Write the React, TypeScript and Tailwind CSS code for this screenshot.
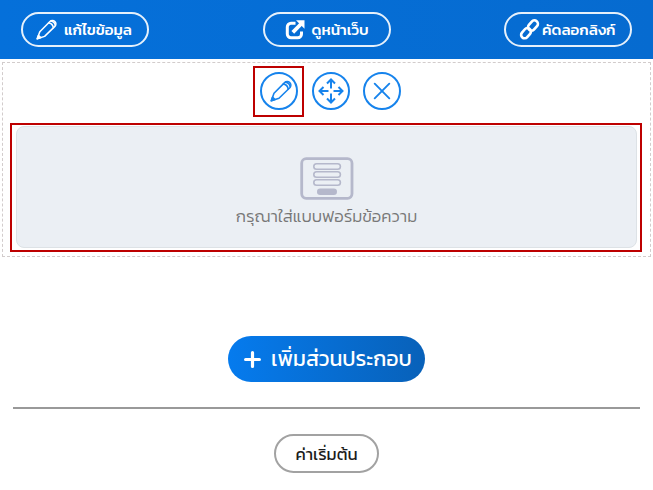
import type { ReactNode } from "react";

const THAI_FONT = "font-['Kanit','Prompt','Noto_Sans_Thai','Noto_Sans',sans-serif]";

function PencilIcon({ className }: { className?: string }) {
  return (
    <svg viewBox="0 0 22 22" className={className} fill="none" stroke="currentColor" strokeWidth="1.6" strokeLinejoin="round" strokeLinecap="round">
      <path d="M1.3 20.7 4 13.3 14.6 2.6A3.6 3.6 0 0 1 19.8 7.7L9 18.2Z" />
      <path d="M13.2 4.1C16 4.3 17.7 6 18.2 9.1M15.6 2.1C18.2 2.6 19.8 4.2 20.2 6.6" />
      <path d="M1.3 20.7 2.5 17.2 5 19.5Z" fill="currentColor" />
    </svg>
  );
}

function OpenIcon() {
  return (
    <svg viewBox="0 0 20 20" className="ml-5 h-5 w-5 shrink-0" fill="none" stroke="currentColor">
      <path d="M10.5 3.3H6A3.7 3.7 0 0 0 2.3 7V14A3.7 3.7 0 0 0 6 17.7H12.8A3.7 3.7 0 0 0 16.5 14V11.5" strokeWidth="3" />
      <path d="M7.8 12.3 16 4" strokeWidth="3.8" />
      <path d="M11 0.3H19.5V8.8Z" fill="currentColor" stroke="none" />
    </svg>
  );
}

function LinkIcon() {
  return (
    <svg viewBox="0 0 20 20" className="ml-[13px] h-[21px] w-[21px] shrink-0" fill="none" stroke="currentColor" strokeWidth="2.5">
      <rect x="-5.4" y="-3.3" width="10.8" height="6.6" rx="3.3" transform="translate(13.3 6.2) rotate(-49)" />
      <rect x="-5.4" y="-3.3" width="10.8" height="6.6" rx="3.3" transform="translate(6.7 13.5) rotate(-49)" />
    </svg>
  );
}

function MoveIcon() {
  return (
    <svg viewBox="0 0 26 26" className="h-[26px] w-[26px] shrink-0" fill="none" stroke="currentColor" strokeWidth="2">
      <path d="M13 10.5V2M13 15.5V24M10.5 13H2M15.5 13H24" />
      <path d="M9 5.5 13 1.5 17 5.5M9 20.5 13 24.5 17 20.5M5.5 9 1.5 13 5.5 17M20.5 9 24.5 13 20.5 17" />
    </svg>
  );
}

function CloseIcon() {
  return (
    <svg viewBox="0 0 18 18" className="h-[18px] w-[18px]" fill="none" stroke="currentColor" strokeWidth="1.9" strokeLinecap="round">
      <path d="M1.7 1.7 16.3 16.3M16.3 1.7 1.7 16.3" />
    </svg>
  );
}

function FormIcon() {
  return (
    <svg viewBox="0 0 54 43" className="ml-0.5 h-[43px] w-[54px] shrink-0" fill="none" stroke="#b5b8cb">
      <rect x="1.7" y="1.7" width="50.3" height="39.6" rx="4.5" strokeWidth="2.8" />
      <rect x="13.8" y="6.8" width="26.6" height="5.5" rx="2.75" strokeWidth="1.6" />
      <rect x="13.8" y="14.8" width="26.6" height="5.5" rx="2.75" strokeWidth="1.6" />
      <rect x="13.8" y="22.8" width="26.6" height="5.5" rx="2.75" strokeWidth="1.6" />
      <rect x="17" y="31.5" width="20" height="6.5" rx="3.2" fill="#b5b8cb" stroke="none" />
    </svg>
  );
}

function HeaderButton({ children }: { children: ReactNode }) {
  return (
    <button className="flex h-[35px] w-32 items-center rounded-full border-2 border-white/90 text-[15.2px] leading-5 font-medium whitespace-nowrap text-white">
      {children}
    </button>
  );
}

function RoundButton({ children }: { children: ReactNode }) {
  return (
    <button className="flex h-[38px] w-[38px] shrink-0 items-center justify-center rounded-full border-2 border-[#1683ec]">
      {children}
    </button>
  );
}

export default function App() {
  return (
    <div className={`h-[490px] w-[653px] overflow-hidden bg-white ${THAI_FONT}`}>
      <header className="flex h-[59px] items-center justify-between bg-linear-to-r from-[#0570da] to-[#066bd0] px-[21px]">
        <HeaderButton>
          <PencilIcon className="ml-[13px] h-[21px] w-[21px] shrink-0" />
          <span className="ml-[7px] pt-px">แก้ไขข้อมูล</span>
        </HeaderButton>
        <HeaderButton>
          <OpenIcon />
          <span className="ml-[7px] pt-px">ดูหน้าเว็บ</span>
        </HeaderButton>
        <HeaderButton>
          <LinkIcon />
          <span className="ml-0.5 pt-px">คัดลอกลิงก์</span>
        </HeaderButton>
      </header>

      <section className="mt-[3px] ml-0.5 h-[195px] w-[649px] border border-dashed border-[#d2cccc]">
        <div className="flex items-center pt-[3px] pl-[250px] text-[#1683ec]">
          <div className="flex h-[51px] w-[51px] items-center justify-center border-2 border-[#bd0000] pb-0.5 pl-px">
            <RoundButton>
              <PencilIcon className="ml-[3px] h-[22px] w-[22px]" />
            </RoundButton>
          </div>
          <div className="ml-2 flex gap-[13px] pb-0.5">
            <RoundButton>
              <MoveIcon />
            </RoundButton>
            <RoundButton>
              <CloseIcon />
            </RoundButton>
          </div>
        </div>
        <div className="mt-1.5 ml-[7px] h-[129px] w-[632px] border-2 border-[#bd0000] px-[3.5px] pt-px">
          <div className="flex h-[122px] flex-col items-center rounded-lg border border-[#dde2e6] bg-[#ebeff4] pt-[30px]">
            <FormIcon />
            <p className="mt-[5px] ml-px text-[16.8px] leading-6 font-light whitespace-nowrap text-[#777777]">กรุณาใส่แบบฟอร์มข้อความ</p>
          </div>
        </div>
      </section>

      <button className="mt-[79px] ml-[228px] flex h-[46px] w-[197px] items-center rounded-full bg-linear-to-r from-[#057bee] to-[#0861b9] pl-4 text-white">
        <svg viewBox="0 0 17 17" className="h-[17px] w-[17px] shrink-0" stroke="currentColor" strokeWidth="3.2" strokeLinecap="round">
          <path d="M8.5 1.6V15.4M1.6 8.5H15.4" />
        </svg>
        <span className="ml-2.5 text-[21.3px] leading-7 whitespace-nowrap">เพิ่มส่วนประกอบ</span>
      </button>

      <hr className="mt-[25px] mr-[13px] ml-[13px] border-t-2 border-[#999999]" />

      <button className="mt-[25px] ml-[274px] flex h-[39px] w-[105px] items-center justify-center rounded-full border-2 border-[#a2a2a2] pt-0.5 text-[16.7px] text-[#1c1c1c]">
        ค่าเริ่มต้น
      </button>
    </div>
  );
}
